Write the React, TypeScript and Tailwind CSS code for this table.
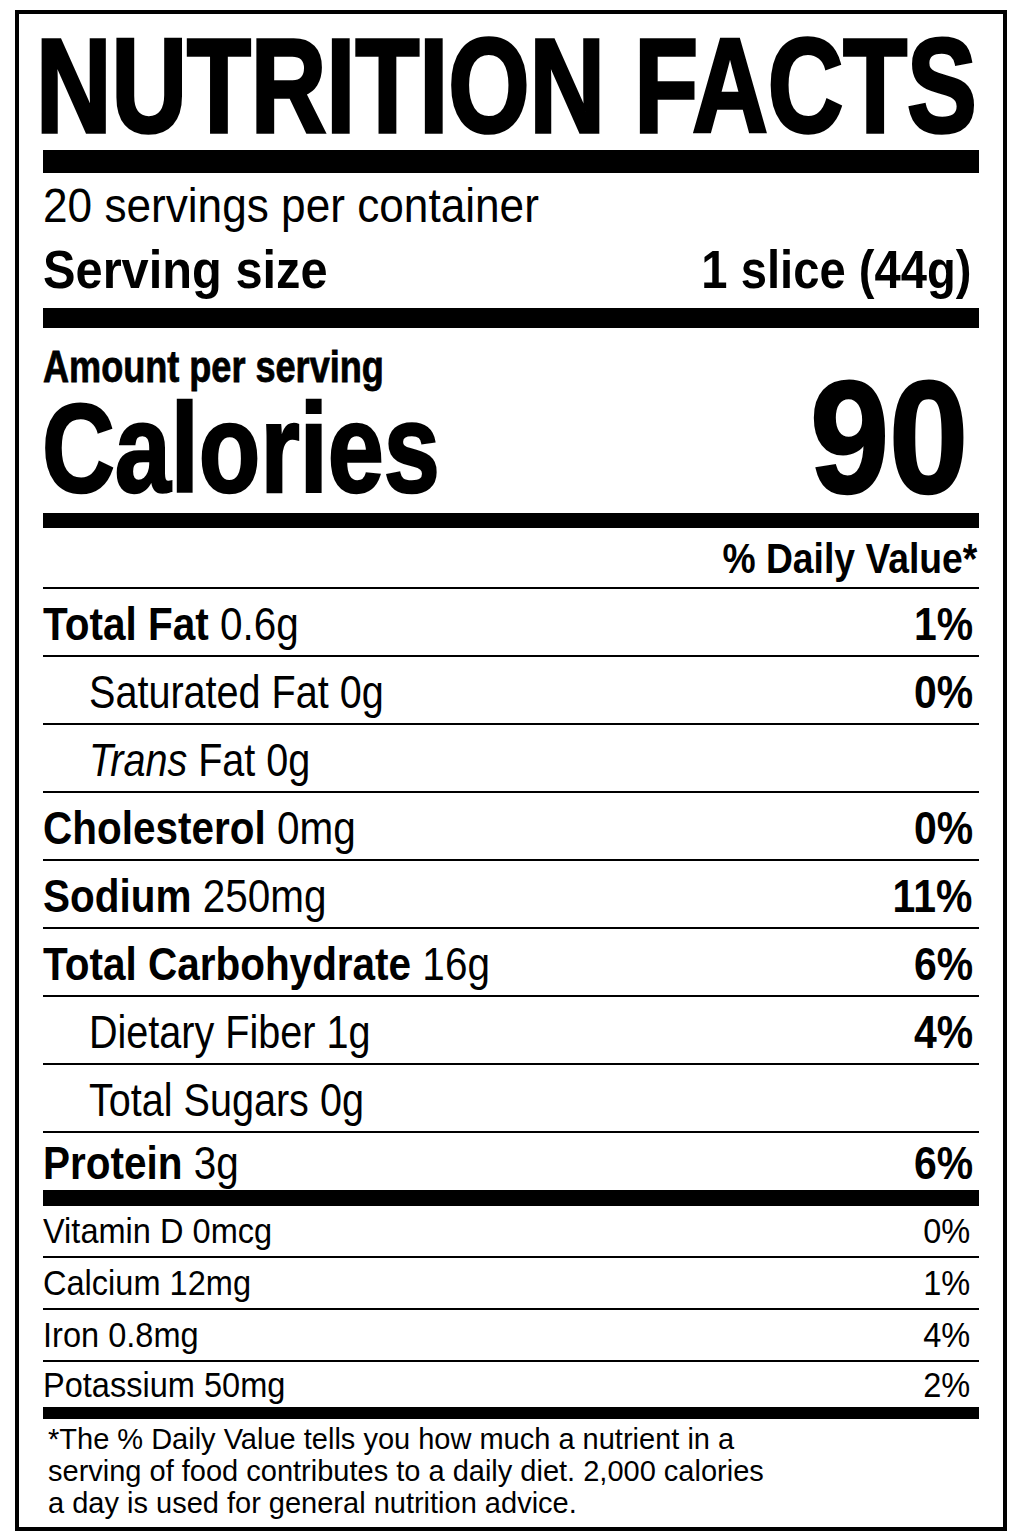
import React from 'react';

const nutrients = [
  { name: 'Total Fat', amount: '0.6g', dv: '1%', bold: true },
  { name: 'Saturated Fat', amount: '0g', dv: '0%', indent: true },
  { name: 'Trans', amount: '0g', dv: '', indent: true, trans: true },
  { name: 'Cholesterol', amount: '0mg', dv: '0%', bold: true },
  { name: 'Sodium', amount: '250mg', dv: '11%', bold: true },
  { name: 'Total Carbohydrate', amount: '16g', dv: '6%', bold: true },
  { name: 'Dietary Fiber', amount: '1g', dv: '4%', indent: true },
  { name: 'Total Sugars', amount: '0g', dv: '', indent: true },
];

const vitamins = [
  { name: 'Vitamin D 0mcg', dv: '0%' },
  { name: 'Calcium 12mg', dv: '1%' },
  { name: 'Iron 0.8mg', dv: '4%' },
];

const App = () => {
  return (
    <div className="w-[1023px] h-[1537px] overflow-hidden bg-white pt-[10px] pl-[15px] text-black font-['Liberation_Sans',Arial,sans-serif]">
      <div className="w-[992px] h-[1521px] border-4 border-black px-[24px] flex flex-col">
        {/* header */}
        <div className="h-[136px] pt-[4px] text-[133px] leading-[136px] font-bold whitespace-nowrap">
          <span className="inline-block origin-left scale-x-[0.786] -ml-[7px] [-webkit-text-stroke:3.5px_black]">
            NUTRITION FACTS
          </span>
        </div>
        <div className="h-[23px] bg-black" />

        <div className="h-[65px] text-[48px] leading-[65px] whitespace-nowrap">
          <span className="inline-block origin-left scale-x-[0.92]">20 servings per container</span>
        </div>
        <div className="h-[70px] flex justify-between text-[53px] leading-[63px] font-bold whitespace-nowrap">
          <span className="inline-block origin-left scale-x-[0.92]">Serving size</span>
          <span className="inline-block origin-right scale-x-[0.89] pr-[9px]">1 slice (44g)</span>
        </div>
        <div className="h-[20px] bg-black" />

        {/* calories */}
        <div className="h-[57px] pt-[20px] text-[44px] leading-[37px] font-bold whitespace-nowrap">
          <span className="inline-block origin-left scale-x-[0.82] [-webkit-text-stroke:0.8px_black]">
            Amount per serving
          </span>
        </div>
        <div className="h-[128px] flex justify-between items-start font-bold whitespace-nowrap">
          <span className="inline-block origin-left scale-x-[0.80] -ml-[1px] text-[126px] leading-[128px] [-webkit-text-stroke:2.5px_black]">
            Calories
          </span>
          <span className="inline-block origin-right scale-x-[0.89] pr-[12px] text-[160px] leading-[104px] [-webkit-text-stroke:2.5px_black]">
            90
          </span>
        </div>
        <div className="h-[15px] bg-black" />

        <div className="h-[61px] border-b-2 border-black pt-[1px] text-right text-[42px] leading-[59px] font-bold whitespace-nowrap">
          <span className="inline-block origin-right scale-x-[0.888] pr-[2px]">% Daily Value*</span>
        </div>

        {/* nutrients */}
        {nutrients.map((n) => (
          <div
            key={n.name}
            className="h-[68px] flex justify-between border-b-2 border-black pt-[2px] text-[46px] leading-[66px] whitespace-nowrap"
          >
            <span className={`inline-block origin-left ${n.indent ? 'ml-[46px] scale-x-[0.86]' : 'scale-x-[0.88]'}`}>
              {n.trans ? (
                <>
                  <i>Trans</i> Fat {n.amount}
                </>
              ) : n.bold ? (
                <>
                  <b>{n.name}</b> {n.amount}
                </>
              ) : (
                <>
                  {n.name} {n.amount}
                </>
              )}
            </span>
            <span className="inline-block origin-right scale-x-[0.89] pr-[7px] font-bold">{n.dv}</span>
          </div>
        ))}
        <div className="h-[57px] flex justify-between text-[46px] leading-[60px] whitespace-nowrap">
          <span className="inline-block origin-left scale-x-[0.88]">
            <b>Protein</b> 3g
          </span>
          <span className="inline-block origin-right scale-x-[0.89] pr-[7px] font-bold">6%</span>
        </div>
        <div className="h-[16px] bg-black" />

        {/* vitamins & minerals */}
        {vitamins.map((v) => (
          <div
            key={v.name}
            className="h-[52px] flex justify-between border-b-2 border-black text-[35px] leading-[50px] whitespace-nowrap"
          >
            <span className="inline-block origin-left scale-x-[0.93]">{v.name}</span>
            <span className="inline-block origin-right scale-x-[0.93] pr-[9px]">{v.dv}</span>
          </div>
        ))}
        <div className="h-[45px] flex justify-between text-[35px] leading-[46px] whitespace-nowrap">
          <span className="inline-block origin-left scale-x-[0.93]">Potassium 50mg</span>
          <span className="inline-block origin-right scale-x-[0.93] pr-[9px]">2%</span>
        </div>
        <div className="h-[12px] bg-black" />

        <p className="pl-[5px] pt-[4px] text-[29px] leading-[32px]">
          *The % Daily Value tells you how much a nutrient in a
          <br />
          serving of food contributes to a daily diet. 2,000 calories
          <br />a day is used for general nutrition advice.
        </p>
      </div>
    </div>
  );
};

export default App;
